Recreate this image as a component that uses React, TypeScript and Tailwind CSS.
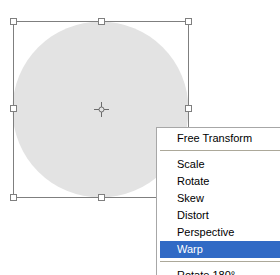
const items = ['Scale', 'Rotate', 'Skew', 'Distort', 'Perspective', 'Warp']

function Handle({ x, y }: { x: number; y: number }) {
  return <rect x={x - 2.5} y={y - 2.5} width={6} height={6} fill="#fff" stroke="#7f7f7f" />
}

function Sep() {
  return <div className="mx-[3px] mt-[3px] mb-[5px] h-px bg-[#aca899]" />
}

export default function App() {
  return (
    <div className="relative h-[275px] w-[280px] overflow-hidden bg-white font-['Liberation_Sans',Arial,sans-serif] text-[11px] text-black">
      {/* canvas: circle + transform box */}
      <svg width={280} height={275} className="block">
        <circle cx={100.5} cy={109.5} r={88} fill="#e3e3e3" />
        <rect x={13.5} y={21.5} width={175} height={176} fill="none" stroke="#7f7f7f" />
        <Handle x={13} y={21} />
        <Handle x={101} y={21} />
        <Handle x={188} y={21} />
        <Handle x={13} y={108} />
        <Handle x={188} y={108} />
        <Handle x={13} y={197} />
        <Handle x={101} y={197} />
        {/* reference point */}
        <g stroke="#6b6b6b" fill="none">
          <circle cx={101.5} cy={109.5} r={2.5} />
          <path d="M101.5 102v5M101.5 112v5M94 109.5h5M104 109.5h5" />
        </g>
      </svg>

      {/* context menu */}
      <div className="absolute left-[156px] top-[127px] w-[140px] border border-[#a7a7a7] bg-white pt-[2px]">
        <div className="mx-[3px] h-[17px] pl-[17px] leading-[17px]">Free Transform</div>
        <Sep />
        {items.map((t) => (
          <div
            key={t}
            className={`mx-[3px] h-[17px] pl-[17px] leading-[17px] ${t === 'Warp' ? 'bg-[#316ac5] text-white' : ''}`}
          >
            {t}
          </div>
        ))}
        <Sep />
        <div className="mx-[3px] h-[17px] pl-[17px] leading-[17px]">Rotate 180°</div>
      </div>
    </div>
  )
}
